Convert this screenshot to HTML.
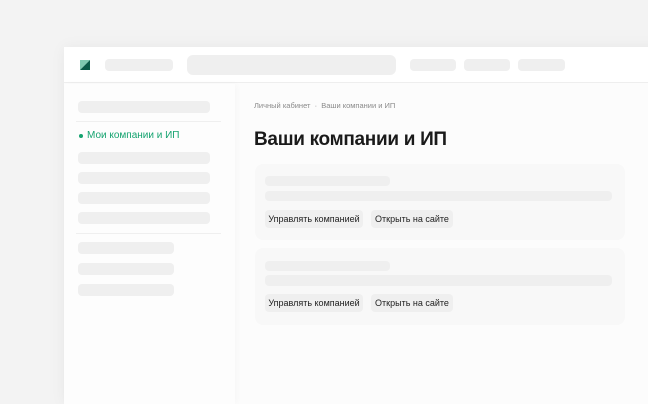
<!DOCTYPE html>
<html style="width:648px;height:404px;overflow:hidden"><head><meta charset="utf-8"><style>
*{margin:0;padding:0;box-sizing:border-box}
body{width:648px;height:404px;background:#f3f3f3;position:relative;overflow:hidden;font-family:"Liberation Sans","Noto Sans CJK SC",sans-serif}
.a{position:absolute}
.b{position:absolute;background:#efefef;border-radius:4px}
.win{left:64px;top:47px;width:600px;height:357px;background:#fcfcfc;box-shadow:0 0 14px rgba(0,0,0,0.05)}
.hdr{left:64px;top:47px;width:600px;height:36px;background:#fff;border-bottom:1px solid #eeeeee}
.side{left:64px;top:84px;width:171px;height:320px;background:#fdfdfd;box-shadow:2px 0 6px rgba(0,0,0,0.025)}
.card{position:absolute;left:255px;width:370px;background:#f8f8f8;border-radius:8px}
.btn{position:absolute;background:#efefef;border-radius:4px;font-size:9px;color:#222;line-height:18px;text-align:center;font-weight:500}
</style></head><body>
<div class="a win"></div>
<div class="a hdr"></div>
<svg class="a" style="left:80px;top:60px" width="10" height="10"><polygon points="0,0 10,0 0,10" fill="#7fc8b0"/><polygon points="10,0 10,10 0,10" fill="#0a5a48"/></svg>
<div class="b" style="left:105px;top:59px;width:68px;height:12px"></div>
<div class="b" style="left:187px;top:55px;width:209px;height:20px;border-radius:6px"></div>
<div class="b" style="left:410px;top:59px;width:46px;height:12px"></div>
<div class="b" style="left:464px;top:59px;width:46px;height:12px"></div>
<div class="b" style="left:518px;top:59px;width:47px;height:12px"></div>
<div class="a side"></div>
<div class="b" style="left:78px;top:101px;width:132px;height:12px"></div>
<div class="a" style="left:76px;top:121px;width:145px;height:1px;background:#efefef"></div>
<div class="a" style="left:79px;top:134px;width:4px;height:4px;border-radius:50%;background:#14a36f"></div>
<div class="a" style="left:87px;top:130px;font-size:10px;color:#14a36f;font-weight:500">Мои компании и ИП</div>
<div class="b" style="left:78px;top:152px;width:132px;height:12px"></div>
<div class="b" style="left:78px;top:172px;width:132px;height:12px"></div>
<div class="b" style="left:78px;top:192px;width:132px;height:12px"></div>
<div class="b" style="left:78px;top:212px;width:132px;height:12px"></div>
<div class="a" style="left:76px;top:233px;width:145px;height:1px;background:#efefef"></div>
<div class="b" style="left:78px;top:242px;width:96px;height:12px"></div>
<div class="b" style="left:78px;top:263px;width:96px;height:12px"></div>
<div class="b" style="left:78px;top:284px;width:96px;height:12px"></div>
<div class="a" style="left:254px;top:101px;font-size:7.5px;color:#8a8a8a">Личный кабинет&nbsp; · &nbsp;Ваши компании и ИП</div>
<div class="a" style="left:254px;top:129px;font-size:19px;font-weight:bold;color:#1a1a1a;letter-spacing:-0.3px">Ваши компании и ИП</div>
<div class="card" style="top:164px;height:76px"></div>
<div class="b" style="left:265px;top:176px;width:125px;height:10px"></div>
<div class="b" style="left:265px;top:191px;width:347px;height:10px"></div>
<div class="btn" style="left:265px;top:210px;width:98px">Управлять компанией</div>
<div class="btn" style="left:371px;top:210px;width:82px">Открыть на сайте</div>
<div class="card" style="top:248px;height:77px"></div>
<div class="b" style="left:265px;top:261px;width:125px;height:10px"></div>
<div class="b" style="left:265px;top:275px;width:347px;height:11px"></div>
<div class="btn" style="left:265px;top:294px;width:98px">Управлять компанией</div>
<div class="btn" style="left:371px;top:294px;width:82px">Открыть на сайте</div>
</body></html>
